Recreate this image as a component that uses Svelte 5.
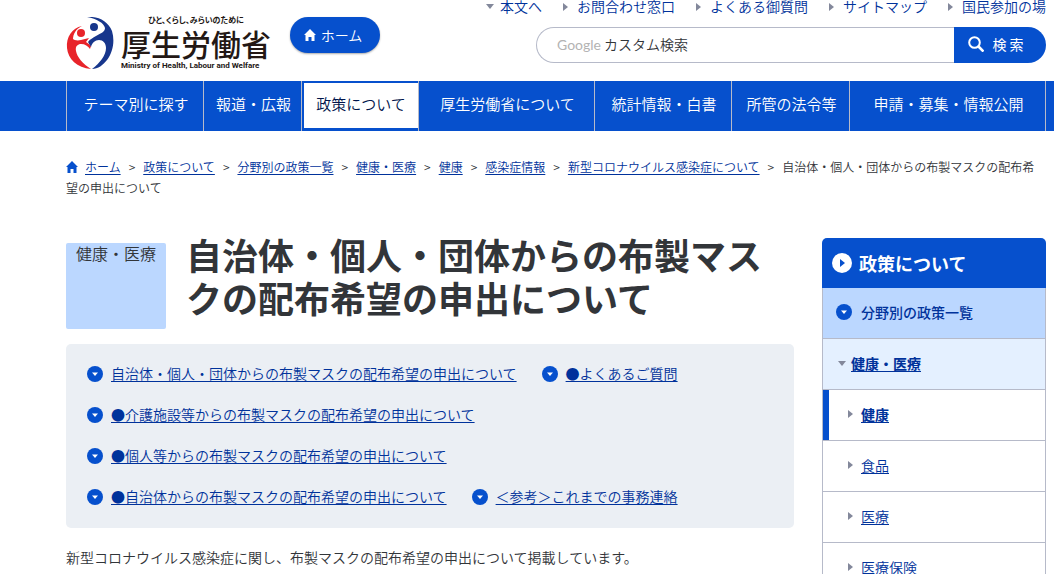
<script lang="ts">
	const utilityLinks = ["本文へ", "お問合わせ窓口", "よくある御質問", "サイトマップ", "国民参加の場"];

	const navItems = [
		"テーマ別に探す",
		"報道・広報",
		"政策について",
		"厚生労働省について",
		"統計情報・白書",
		"所管の法令等",
		"申請・募集・情報公開"
	];
	const activeNav = "政策について";

	const crumbs = [
		"政策について",
		"分野別の政策一覧",
		"健康・医療",
		"健康",
		"感染症情報",
		"新型コロナウイルス感染症について"
	];

	const pageTitle = "自治体・個人・団体からの布製マスクの配布希望の申出について";

	const anchors = [
		"自治体・個人・団体からの布製マスクの配布希望の申出について",
		"●よくあるご質問",
		"●介護施設等からの布製マスクの配布希望の申出について",
		"●個人等からの布製マスクの配布希望の申出について",
		"●自治体からの布製マスクの配布希望の申出について",
		"＜参考＞これまでの事務連絡"
	];

	const sideItems = ["健康", "食品", "医療", "医療保険"];
	const activeSide = "健康";

	let query = $state("");
</script>

{#snippet house()}
	<svg class="house" viewBox="0 0 12 12" aria-hidden="true">
		<path d="M6 0 12 6h-1.500v6H7.500V8h-3v4h-3V6H0z" fill="currentColor" />
	</svg>
{/snippet}

{#snippet disc()}
	<svg class="disc" viewBox="0 0 16 16" aria-hidden="true">
		<circle cx="8" cy="8" r="8" fill="#0650cd" />
		<path d="M5 6.500h6L8 10z" fill="#fff" />
	</svg>
{/snippet}

<header>
	<a class="logo" href="#top">
		<svg class="emblem" viewBox="0 0 48 54" aria-hidden="true">
			<path
				d="M16 9C6 11 0 20 1 31C2 42 11 51 25 52C17 47 11 40 10 34C9 29 12 27 15 27C19 27 22 29 24 32L25 29C24 27 21 26 20 25L23 21L15 23C11 24 8 23 7 22C7 17 10 12 16 9Z"
				fill="#e8242a"
			/>
			<circle cx="15" cy="16" r="4" fill="#e8242a" />
			<path
				d="M21 0C32 -1 42 4 46 14C49 24 47 35 41 43C37 48 32 52 26 52C34 46 40 38 40 31C40 26 37 23 33 23C29 23 26 26 25 30L22 25C24 22 27 21 30 19C35 16 39 15 39 11C38 6 31 2 21 0Z"
				fill="#17368c"
			/>
			<circle cx="28" cy="10" r="4" fill="#17368c" />
		</svg>
		<span class="logo-text">
			<span class="tagline">ひと、くらし、みらいのために</span>
			<span class="ministry">厚生労働省</span>
			<span class="english">Ministry of Health, Labour and Welfare</span>
		</span>
	</a>
	<a class="home" href="#home">{@render house()}ホーム</a>

	<div class="tools">
		<ul class="utility">
			{#each utilityLinks as label, i}
				<li><i class="arrow" class:down={i === 0}></i><a href="#{label}">{label}</a></li>
			{/each}
		</ul>
		<form onsubmit={(e) => e.preventDefault()}>
			<label for="search"><span>Google</span> カスタム検索</label>
			<input id="search" type="text" bind:value={query} />
			<button type="submit">
				<svg viewBox="0 0 16 16" aria-hidden="true">
					<circle cx="6.500" cy="6.500" r="5.300" fill="none" stroke="#fff" stroke-width="2" />
					<path d="m10.500 10.500 5 5" stroke="#fff" stroke-width="2.600" />
				</svg>
				検 索
			</button>
		</form>
	</div>
</header>

<nav class="global">
	<ul>
		{#each navItems as item}
			<li><a href="#{item}" class:active={item === activeNav}>{item}</a></li>
		{/each}
	</ul>
</nav>

<div class="breadcrumb">
	{@render house()}<a href="#home">ホーム</a>{#each crumbs as crumb}<span class="sep">&gt;</span><a href="#{crumb}">{crumb}</a>{/each}<span class="sep">&gt;</span>{pageTitle}
</div>

<div class="columns">
	<main>
		<div class="title">
			<div class="category">健康・医療</div>
			<h1>{pageTitle}</h1>
		</div>
		<ul class="anchors">
			{#each anchors as anchor}
				<li>{@render disc()}<a href="#{anchor}">{anchor}</a></li>
			{/each}
		</ul>
		<p>新型コロナウイルス感染症に関し、布製マスクの配布希望の申出について掲載しています。</p>
	</main>

	<aside>
		<h2>
			<svg viewBox="0 0 20 20" aria-hidden="true">
				<circle cx="10" cy="10" r="10" fill="#fff" />
				<path d="M8 6v8l5-4z" fill="#0650cd" />
			</svg>
			政策について
		</h2>
		<ul>
			<li class="section">{@render disc()}<a href="#list">分野別の政策一覧</a></li>
			<li class="group"><i class="arrow down"></i><a href="#health">健康・医療</a></li>
			{#each sideItems as item}
				<li class="item" class:current={item === activeSide}>
					<i class="arrow"></i><a href="#{item}">{item}</a>
				</li>
			{/each}
		</ul>
	</aside>
</div>

<style>
	:global(body) {
		background: #fff;
		color: #323539;
		font-family: "Noto Sans CJK JP", sans-serif;
		font-size: 14px;
		font-weight: 350;
		line-height: 21px;
	}

	ul,
	h1,
	h2,
	p {
		margin: 0;
		padding: 0;
	}

	ul {
		list-style: none;
	}

	a {
		color: #00329b;
		text-underline-offset: 2px;
	}

	.house {
		width: 12px;
		height: 12px;
		color: #0650cd;
	}

	.disc {
		flex: none;
		width: 16px;
		height: 16px;
	}

	.arrow {
		flex: none;
		border-left: 5px solid #83889b;
		border-top: 4px solid transparent;
		border-bottom: 4px solid transparent;
	}

	.arrow.down {
		border-top: 5px solid #83889b;
		border-left: 4px solid transparent;
		border-right: 4px solid transparent;
		border-bottom: 0;
	}

	header {
		display: flex;
		align-items: flex-start;
		height: 81px;
		padding: 0 8px 0 66px;
	}

	.logo {
		display: flex;
		gap: 7px;
		padding-top: 14px;
		color: #231815;
		text-decoration: none;
		white-space: nowrap;
	}

	.emblem {
		width: 48px;
		height: 54px;
		margin-top: 3px;
	}

	.logo-text {
		display: flex;
		flex-direction: column;
	}

	.tagline {
		align-self: center;
		font-feature-settings: "palt";
		font-size: 8px;
		font-weight: 700;
		line-height: 12px;
	}

	.ministry {
		font-size: 30px;
		font-weight: 500;
		line-height: 35px;
	}

	.english {
		font-family: Roboto, sans-serif;
		font-size: 8px;
		font-weight: 700;
		line-height: 10px;
	}

	.home {
		display: flex;
		flex: none;
		align-items: center;
		justify-content: center;
		gap: 5px;
		box-sizing: border-box;
		width: 90px;
		height: 36px;
		margin: 17px 0 0 19px;
		padding-right: 4px;
		border-radius: 18px;
		box-shadow: 0 1px 2px #0005;
		background: #0650cd;
		color: #fff;
		text-decoration: none;

		.house {
			color: #fff;
		}
	}

	.tools {
		display: flex;
		flex: 1;
		flex-direction: column;
		align-items: flex-end;
		gap: 14px;
	}

	.utility {
		display: flex;
		gap: 21px;
		line-height: 13px;
		white-space: nowrap;

		li {
			display: flex;
			align-items: center;
			gap: 9px;
		}

		li:first-child {
			gap: 6px;
		}

		a {
			text-decoration: none;
		}
	}

	form {
		position: relative;
		display: flex;
		width: 510px;
		height: 36px;
	}

	label {
		position: absolute;
		left: 21px;
		top: 7px;
		pointer-events: none;

		span {
			color: #b3b3b3;
			font-family: Lato, sans-serif;
			font-weight: 400;
		}
	}

	input {
		flex: 1;
		min-width: 0;
		box-sizing: border-box;
		padding: 0 20px;
		border: 1px solid #b6bac9;
		border-right: 0;
		border-radius: 18px 0 0 18px;
		background: #fff;
		font: inherit;
	}

	button {
		display: flex;
		align-items: center;
		justify-content: center;
		gap: 8px;
		width: 92px;
		padding: 0 8px 2px 0;
		border: 0;
		border-radius: 0 18px 18px 0;
		background: #0650cd;
		color: #fff;
		font: inherit;
		font-weight: 400;

		svg {
			width: 16px;
			height: 16px;
		}
	}

	.global {
		padding: 0 8px 0 66px;
		background: #0650cd;

		ul {
			display: grid;
			grid-template-columns: 137fr 98fr 117fr 176fr 137fr 118fr 196fr;
			height: 50px;
			border-right: 1px solid #b6bac9;
		}

		li {
			display: flex;
			border-left: 1px solid #b6bac9;
		}

		a {
			flex: 1;
			margin: 2px 0 3px 2px;
			color: #fff;
			font-size: 15px;
			line-height: 41px;
			text-align: center;
			text-decoration: none;
			white-space: nowrap;
		}

		.active {
			background: #fff;
			color: #00144b;
		}
	}

	.breadcrumb {
		padding: 25px 16px 0 66px;
		font-size: 12px;

		.house {
			margin-right: 7px;
			vertical-align: -1px;
		}

		.sep {
			margin: 0 8px;
		}
	}

	.columns {
		display: flex;
		align-items: flex-start;
		gap: 28px;
		padding: 40px 8px 0 66px;
	}

	main {
		flex: 1;
	}

	.title {
		display: flex;
		gap: 20px;
	}

	.category {
		flex: none;
		width: 100px;
		height: 86px;
		margin-top: 5px;
		border-radius: 2px;
		background: #bbd7ff;
		font-size: 16px;
		text-align: center;
	}

	h1 {
		margin-top: -5px;
		font-size: 36px;
		font-weight: 700;
		line-height: 43px;
	}

	.anchors {
		display: flex;
		flex-wrap: wrap;
		gap: 20px 25px;
		margin: 15px 0 19px;
		padding: 19px 21px 21px;
		border-radius: 5px;
		background: #ebeff4;

		li {
			display: flex;
			align-items: center;
			gap: 8px;
		}
	}

	aside {
		flex: none;
		width: 224px;

		h2 {
			display: flex;
			align-items: center;
			gap: 7px;
			height: 50px;
			padding-left: 10px;
			border-radius: 5px 5px 0 0;
			background: #0650cd;
			color: #fff;
			font-size: 18px;
			font-weight: 700;

			svg {
				width: 20px;
				height: 20px;
			}
		}

		ul {
			border: solid #b6bac9;
			border-width: 0 1px;
		}

		li {
			display: flex;
			align-items: center;
			box-sizing: border-box;
			height: 51px;
			padding-bottom: 2px;
			border-bottom: 1px solid #b6bac9;
		}

		.section {
			gap: 9px;
			padding-left: 13px;
			background: #bbd7ff;
			font-weight: 500;

			a {
				text-decoration: none;
			}
		}

		.group {
			gap: 5px;
			padding-left: 15px;
			background: #e4f0ff;
			font-weight: 700;
		}

		.item {
			gap: 8px;
			padding-left: 25px;
		}

		.current {
			box-shadow: inset 6px 0 #0650cd;
			font-weight: 700;
		}
	}
</style>
